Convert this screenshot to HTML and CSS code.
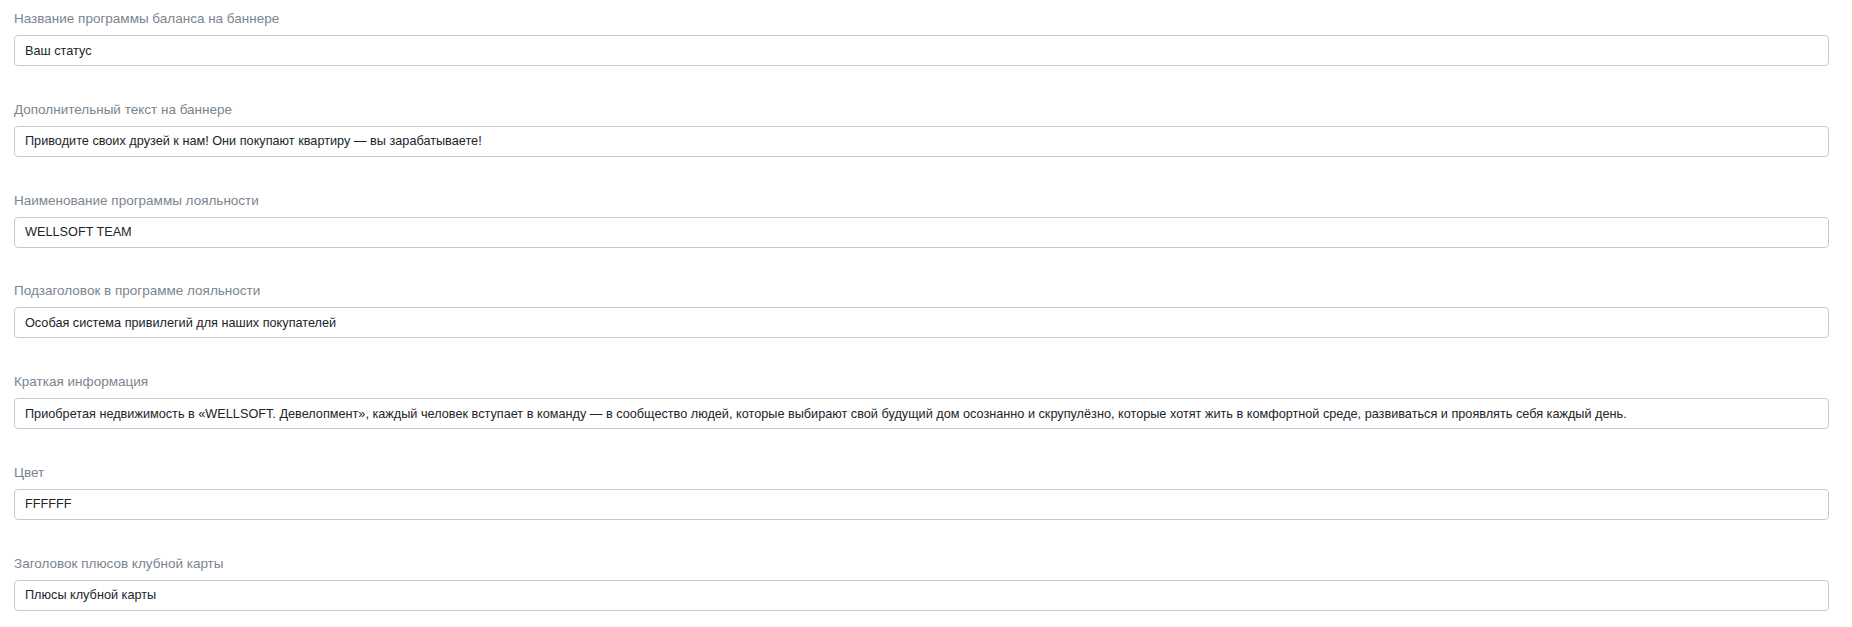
FILE: index.html
```html
<!DOCTYPE html>
<html>
  <head>
    <meta charset="utf-8">
    <title>Настройки программы лояльности</title>
    <link rel="stylesheet" href="styles.css">
  </head>
  <body>
    <div class="settings">
      <div class="formGroup">
        <label class="fieldLabel" for="bannerTitle">Название программы баланса на баннере</label>
        <input type="text" id="bannerTitle" class="fieldInput" value="Ваш статус">
      </div>
      <div class="formGroup">
        <label class="fieldLabel" for="bannerText">Дополнительный текст на баннере</label>
        <input type="text" id="bannerText" class="fieldInput" value="Приводите своих друзей к нам! Они покупают квартиру — вы зарабатываете!">
      </div>
      <div class="formGroup">
        <label class="fieldLabel" for="loyaltyName">Наименование программы лояльности</label>
        <input type="text" id="loyaltyName" class="fieldInput" value="WELLSOFT TEAM">
      </div>
      <div class="formGroup">
        <label class="fieldLabel" for="loyaltySubtitle">Подзаголовок в программе лояльности</label>
        <input type="text" id="loyaltySubtitle" class="fieldInput" value="Особая система привилегий для наших покупателей">
      </div>
      <div class="formGroup">
        <label class="fieldLabel" for="shortInfo">Краткая информация</label>
        <input type="text" id="shortInfo" class="fieldInput" value="Приобретая недвижимость в «WELLSOFT. Девелопмент», каждый человек вступает в команду — в сообщество людей, которые выбирают свой будущий дом осознанно и скрупулёзно, которые хотят жить в комфортной среде, развиваться и проявлять себя каждый день.">
      </div>
      <div class="formGroup">
        <label class="fieldLabel" for="color">Цвет</label>
        <input type="text" id="color" class="fieldInput" value="FFFFFF">
      </div>
      <div class="formGroup">
        <label class="fieldLabel" for="cardTitle">Заголовок плюсов клубной карты</label>
        <input type="text" id="cardTitle" class="fieldInput" value="Плюсы клубной карты">
      </div>
    </div>
  </body>
</html>
```

FILE: styles.css
```css
html {
  background: #ffffff;
}

body {
  margin: 0;
  font-family: "Liberation Sans", Arial, sans-serif;
  font-size: 13px;
  color: #212529;
}

.settings {
  padding: 10px 23px 0 14px;
}

.formGroup {
  margin-bottom: 34.8px;
}

.fieldLabel {
  display: block;
  font-size: 13.5px;
  line-height: 18px;
  margin-bottom: 7px;
  color: #7b858f;
}

.fieldInput {
  display: block;
  box-sizing: border-box;
  width: 100%;
  height: 31px;
  margin: 0;
  padding: 0 10px;
  font-family: "Liberation Sans", Arial, sans-serif;
  font-size: 12.7px;
  color: #212529;
  background: #ffffff;
  border: 1px solid #c6cacf;
  border-radius: 4px;
  outline: none;
}
```
